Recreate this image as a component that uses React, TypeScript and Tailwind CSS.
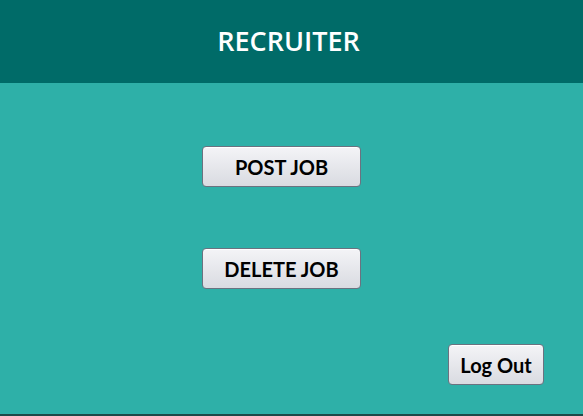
export default function App() {
  const btn =
    "rounded-[4px] border border-[#6b7280] bg-gradient-to-b from-[#f4f4f7] to-[#d9dbe1] text-black font-bold shadow-[inset_0_1px_0_#ffffff] font-['Lato',sans-serif]";
  return (
    <div className="flex h-[416px] w-[583px] flex-col bg-[#2eb0a8]">
      <div className="flex h-[83px] shrink-0 items-center justify-center bg-[#006b68] pr-[6px]">
        <h1 className="font-['Open_Sans',sans-serif] text-[27px] font-semibold text-white">RECRUITER</h1>
      </div>
      <div className="flex flex-1 flex-col items-start pl-[202px]">
        <button className={`${btn} mt-[63px] h-[41px] w-[159px] text-[20px]`}>POST JOB</button>
        <button className={`${btn} mt-[61px] h-[41px] w-[159px] text-[20px]`}>DELETE JOB</button>
      </div>
      <div className="flex justify-end pb-[29px] pr-[39px]">
        <button className={`${btn} h-[41px] w-[96px] text-[20px]`}>Log Out</button>
      </div>
      <div className="h-[2px] shrink-0 bg-[#1d4a48]" />
    </div>
  );
}
